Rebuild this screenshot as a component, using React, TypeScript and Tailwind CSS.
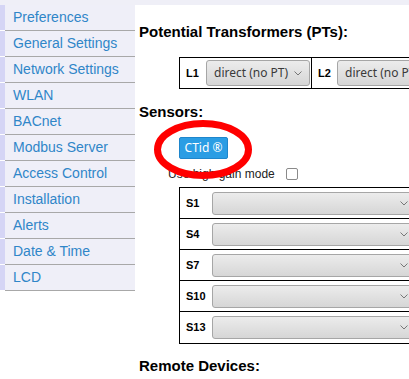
import React from "react";

const items = [
  "Preferences",
  "General Settings",
  "Network Settings",
  "WLAN",
  "BACnet",
  "Modbus Server",
  "Access Control",
  "Installation",
  "Alerts",
  "Date & Time",
  "LCD",
];

function Chevron() {
  return (
    <svg width="8" height="5" viewBox="0 0 8 5" className="shrink-0">
      <path d="M0.5 0.5 L4 4 L7.5 0.5" fill="none" stroke="#777" strokeWidth="1" />
    </svg>
  );
}

function Select({ text, className }: { text?: string; className: string }) {
  return (
    <div
      className={`flex items-center justify-between rounded-[3px] border border-[#a6a6a6] bg-gradient-to-b from-[#ececec] to-[#d6d6d6] pl-[7px] pr-[7px] ${className}`}
    >
      <span className="whitespace-nowrap text-[12px] leading-none text-[#3a3a3a] [font-family:'Noto_Sans',sans-serif]">
        {text}
      </span>
      <Chevron />
    </div>
  );
}

export default function App() {
  const sensors = ["S1", "S4", "S7", "S10", "S13"];
  return (
    <div className="relative h-[379px] w-[409px] overflow-hidden bg-white [font-family:'Liberation_Sans',Arial,sans-serif]">
      <div className="h-[5px] w-full bg-[#efeff7]" />
      <div className="flex">
        <div className="w-[135px] shrink-0">
          {items.map((it) => (
            <div key={it} className="flex h-[26px]">
              <div className="w-[5px] border-b border-white bg-[#d5d5f5]" />
              <div className="flex flex-1 items-center border-b border-[#a8a8a8] bg-[#efeff8] pl-[8px] text-[14px] text-[#2f86c8]">
                {it}
              </div>
            </div>
          ))}
        </div>
        <div className="min-w-0 flex-1 overflow-hidden pl-[4px]">
          <div className="mt-[18px] whitespace-nowrap text-[15px] font-bold leading-[17px] text-black">
            Potential Transformers (PTs):
          </div>
          <div className="ml-[40px] mt-[17px] flex w-[300px] border border-black">
            <div className="flex h-[30px] w-[132px] shrink-0 items-center border-r border-black pl-[6px]">
              <span className="w-[20px] text-[11px] font-bold">L1</span>
              <Select text="direct (no PT)" className="h-[26px] w-[104px]" />
            </div>
            <div className="flex h-[30px] items-center pl-[6px]">
              <span className="w-[19px] text-[11px] font-bold">L2</span>
              <Select text="direct (no PT)" className="h-[26px] w-[104px]" />
            </div>
          </div>
          <div className="mt-[14px] text-[15px] font-bold leading-[17px] text-black">Sensors:</div>
          <div className="ml-[40px] mt-[17px] flex h-[22px] w-[49px] items-center justify-center rounded-[2px] border border-[#1e86cc] bg-[#2a9de4] text-[12px] text-white [font-family:'Noto_Sans',sans-serif]">
            CTid ®
          </div>
          <div className="mt-[7px] flex h-[16px] items-center pl-[29px]">
            <span className="whitespace-nowrap text-[12px] text-[#222]">Use high gain mode</span>
            <span className="ml-[11px] h-[12px] w-[12px] rounded-[2px] border border-[#8a8a8a] bg-white" />
          </div>
          <div className="ml-[40px] mt-[5px] w-[300px] border border-black">
            {sensors.map((s, i) => (
              <div
                key={s}
                className={`flex h-[31px] items-center ${i < sensors.length - 1 ? "border-b border-black" : ""}`}
              >
                <span className="w-[32px] shrink-0 pl-[6px] text-[11px] font-bold">{s}</span>
                <Select className="h-[23px] w-[204px]" />
              </div>
            ))}
          </div>
          <div className="mt-[13px] text-[15px] font-bold leading-[17px] text-black">Remote Devices:</div>
        </div>
      </div>
      <svg className="pointer-events-none absolute left-0 top-0" width="409" height="379">
        <ellipse cx="203" cy="149.5" rx="45.5" ry="26" fill="none" stroke="#ff0000" strokeWidth="7" />
      </svg>
    </div>
  );
}
